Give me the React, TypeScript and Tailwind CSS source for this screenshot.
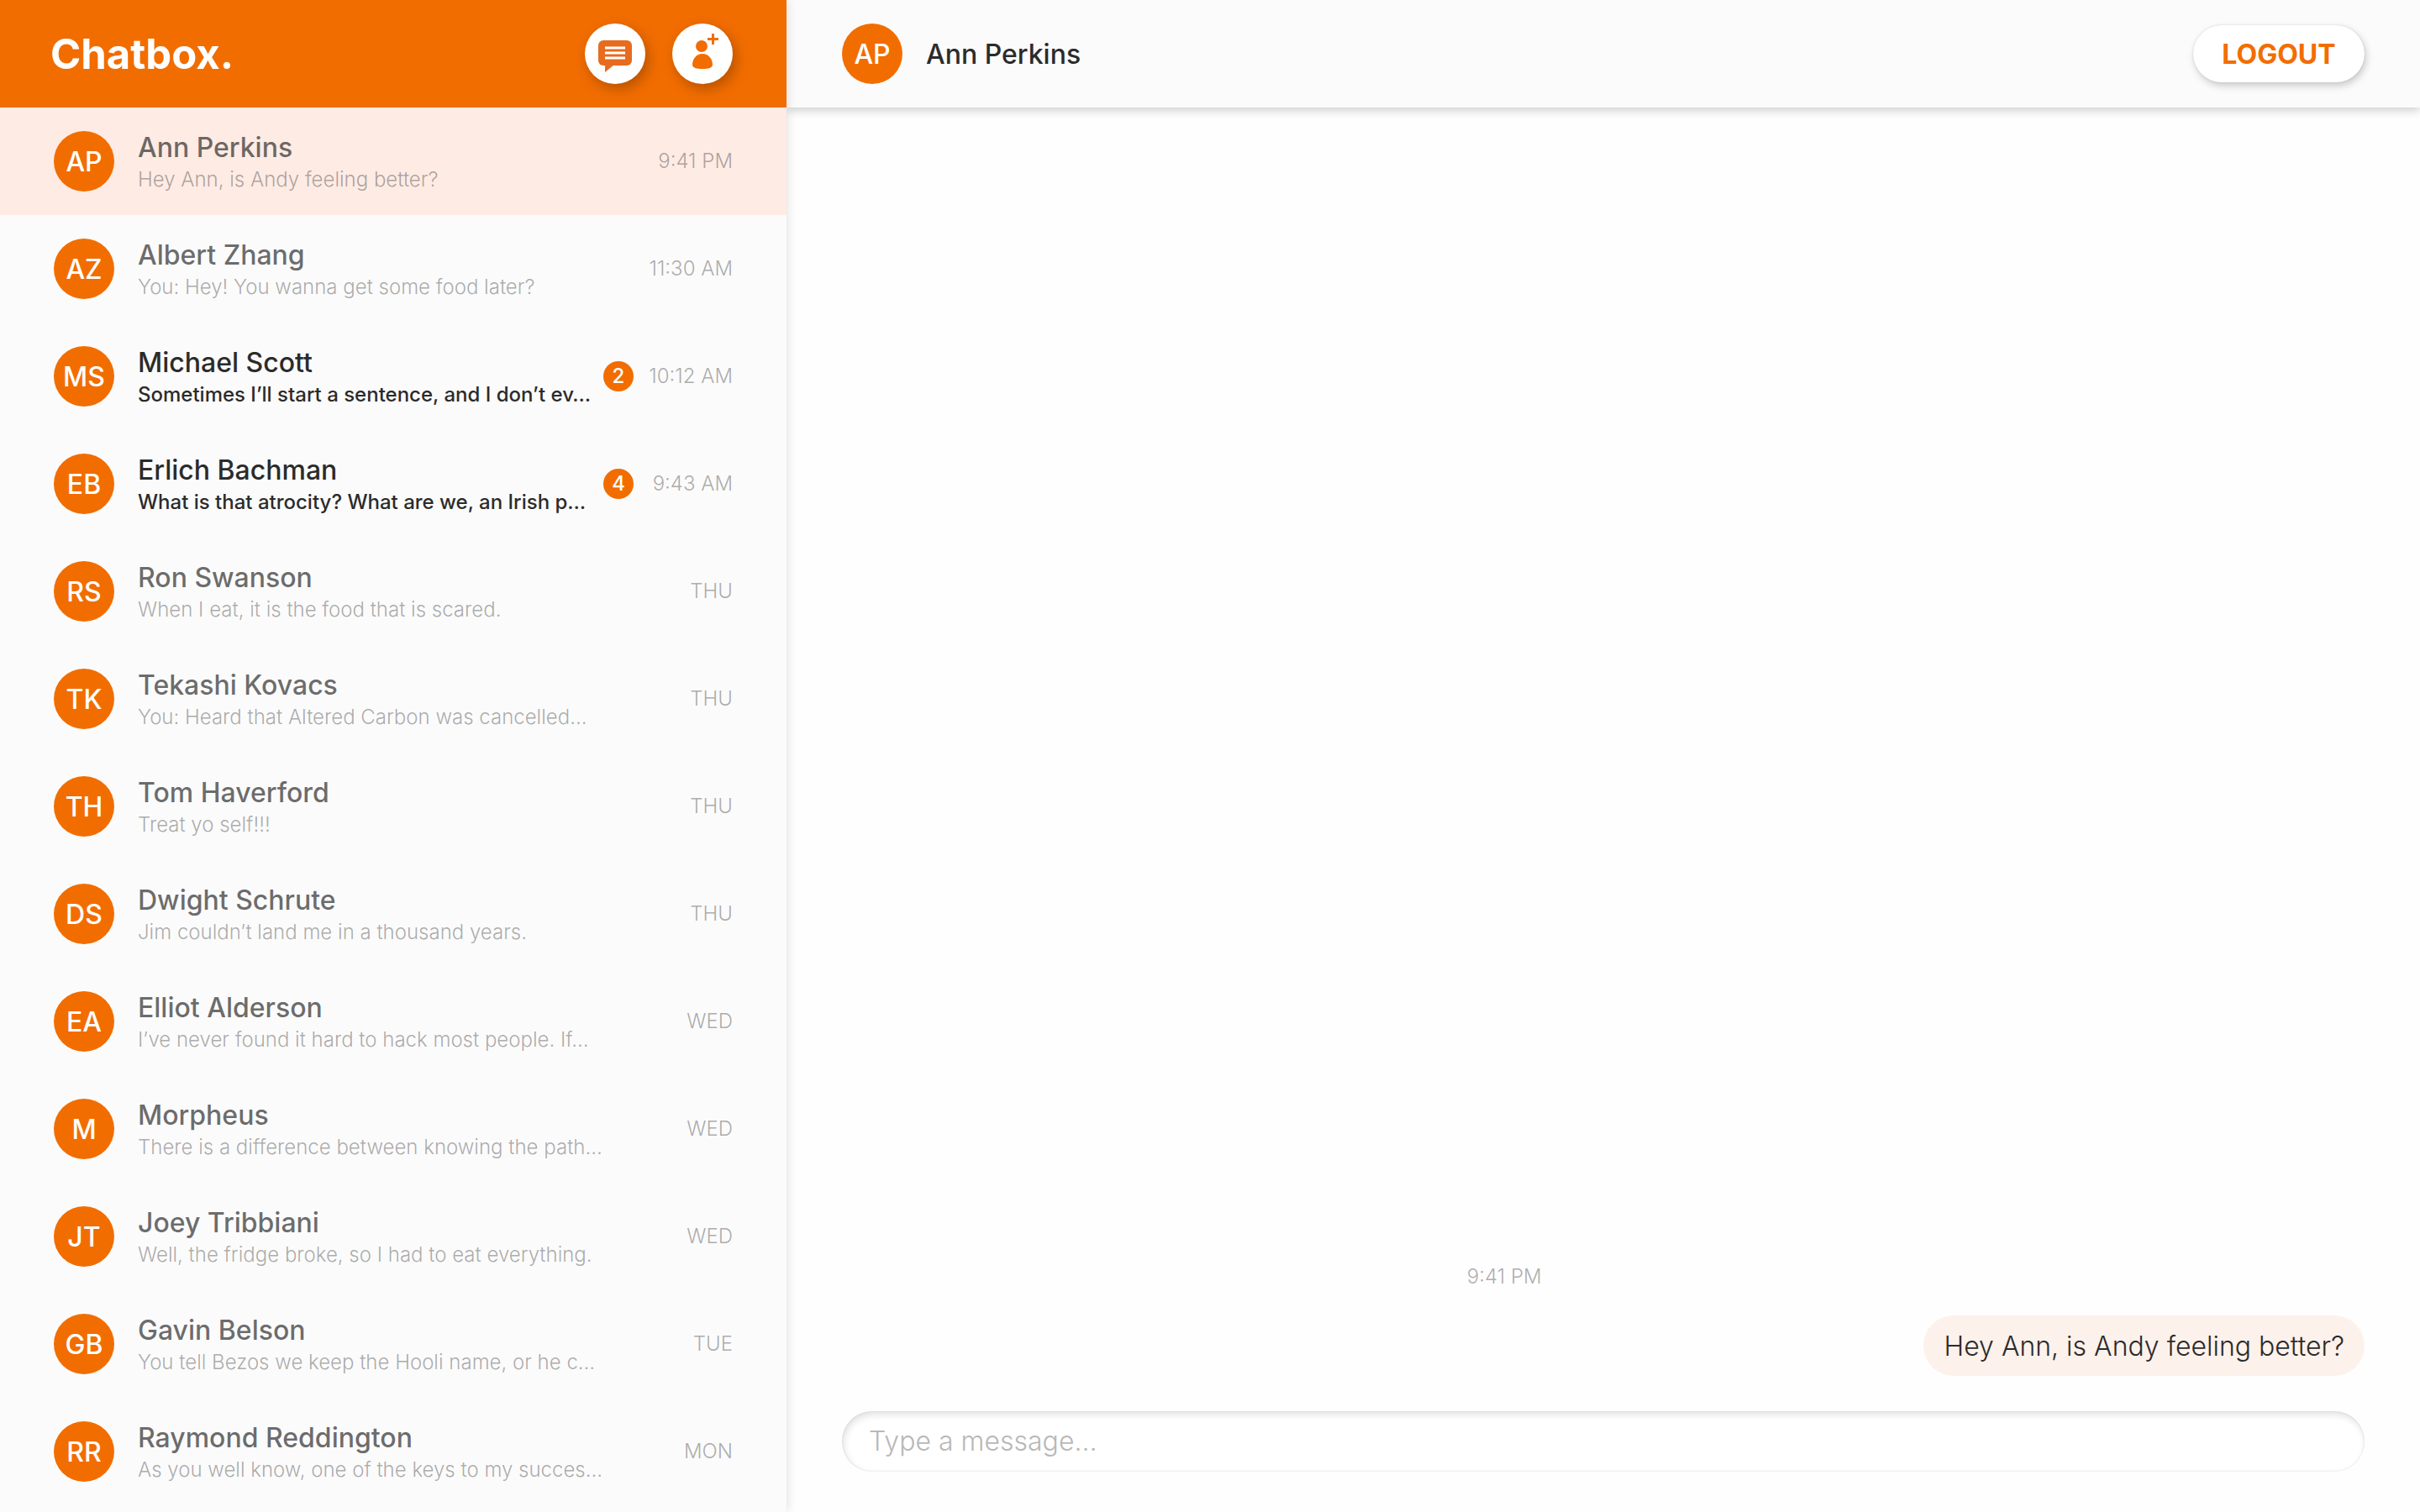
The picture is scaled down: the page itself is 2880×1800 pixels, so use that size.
import type { ReactNode } from "react";

type Chat = {
  initials: string;
  name: string;
  preview: string;
  time: string;
  unread?: number;
  active?: boolean;
};

const chats: Chat[] = [
  { initials: "AP", name: "Ann Perkins", preview: "Hey Ann, is Andy feeling better?", time: "9:41 PM", active: true },
  { initials: "AZ", name: "Albert Zhang", preview: "You: Hey! You wanna get some food later?", time: "11:30 AM" },
  { initials: "MS", name: "Michael Scott", preview: "Sometimes I’ll start a sentence, and I don’t ev…", time: "10:12 AM", unread: 2 },
  { initials: "EB", name: "Erlich Bachman", preview: "What is that atrocity? What are we, an Irish p…", time: "9:43 AM", unread: 4 },
  { initials: "RS", name: "Ron Swanson", preview: "When I eat, it is the food that is scared.", time: "THU" },
  { initials: "TK", name: "Tekashi Kovacs", preview: "You: Heard that Altered Carbon was cancelled…", time: "THU" },
  { initials: "TH", name: "Tom Haverford", preview: "Treat yo self!!!", time: "THU" },
  { initials: "DS", name: "Dwight Schrute", preview: "Jim couldn’t land me in a thousand years.", time: "THU" },
  { initials: "EA", name: "Elliot Alderson", preview: "I’ve never found it hard to hack most people. If…", time: "WED" },
  { initials: "M", name: "Morpheus", preview: "There is a difference between knowing the path…", time: "WED" },
  { initials: "JT", name: "Joey Tribbiani", preview: "Well, the fridge broke, so I had to eat everything.", time: "WED" },
  { initials: "GB", name: "Gavin Belson", preview: "You tell Bezos we keep the Hooli name, or he c…", time: "TUE" },
  { initials: "RR", name: "Raymond Reddington", preview: "As you well know, one of the keys to my succes…", time: "MON" },
];

function Avatar({ initials }: { initials: string }) {
  return (
    <span className="flex size-18 shrink-0 items-center justify-center rounded-full bg-[#f26d00] pt-0.5 text-[32px] leading-10 font-medium text-white">
      {initials}
    </span>
  );
}

function MessageIcon() {
  return (
    <svg viewBox="0 0 72 72" className="size-18" aria-hidden="true">
      <rect x="16" y="20" width="40" height="30" rx="6" fill="#e66c1f" />
      <path d="M24 49v9l11-9z" fill="#e66c1f" />
      <path d="M24 29h24M24 35h24M24 41h24" stroke="#fff" strokeWidth="3" />
    </svg>
  );
}

function AddPersonIcon() {
  return (
    <svg viewBox="0 0 72 72" className="size-18" aria-hidden="true" fill="#f26d00">
      <circle cx="35" cy="27" r="7" />
      <path d="M36 36c7 0 12 6 12 13 0 4-5 5-12 5s-12-1-12-5c0-7 5-13 12-13z" />
      <path d="M47 12h3v5h5v3h-5v5h-3v-5h-5v-3h5z" />
    </svg>
  );
}

function RoundButton({ label, children }: { label: string; children: ReactNode }) {
  return (
    <button
      type="button"
      aria-label={label}
      className="size-18 rounded-full bg-white shadow-[4px_6px_16px_rgba(0,0,0,0.25)]"
    >
      {children}
    </button>
  );
}

function ChatRow({ chat }: { chat: Chat }) {
  const unread = chat.unread !== undefined;
  return (
    <li>
      <button
        type="button"
        className={`flex h-32 w-full items-center pr-16 pl-16 text-left ${chat.active ? "bg-[#feebe4]" : ""}`}
      >
        <Avatar initials={chat.initials} />
        <span className="ml-7 flex min-w-0 flex-1 flex-col pt-1 whitespace-nowrap">
          <span className={`text-[32px] leading-10 font-medium ${unread ? "text-[#2b2b2b]" : "text-[#2b2b2b]/70"}`}>
            {chat.name}
          </span>
          <span
            className={`text-2xl leading-9 ${unread ? "font-medium text-[#2b2b2b]" : "font-light text-[#2b2b2b]/40"}`}
          >
            {chat.preview}
          </span>
        </span>
        {unread && (
          <span className="flex size-9 shrink-0 items-center justify-center rounded-full bg-[#f26d00] text-2xl font-medium text-white">
            {chat.unread}
          </span>
        )}
        <span className="w-[118px] shrink-0 text-right text-2xl font-light whitespace-nowrap text-[#2b2b2b]/40">
          {chat.time}
        </span>
      </button>
    </li>
  );
}

export default function App() {
  return (
    <div className="flex min-h-screen bg-[#fefefe] font-[Inter,sans-serif] text-[#2b2b2b]">
      <aside className="z-20 flex w-[32.5%] shrink-0 flex-col bg-[#fbfbfb] shadow-[0_0_12px_rgba(0,0,0,0.14)]">
        <header className="flex h-32 items-center justify-between bg-[#f26d00] pr-16 pl-15">
          <h1 className="pt-0.5 text-[49px] leading-15 font-bold text-white">Chatbox.</h1>
          <div className="flex gap-8">
            <RoundButton label="New message">
              <MessageIcon />
            </RoundButton>
            <RoundButton label="Add contact">
              <AddPersonIcon />
            </RoundButton>
          </div>
        </header>
        <ul>
          {chats.map((chat) => (
            <ChatRow key={chat.name} chat={chat} />
          ))}
        </ul>
      </aside>

      <main className="flex min-w-0 flex-1 flex-col">
        <header className="z-10 flex h-32 items-center bg-[#fbfbfb] px-[66px] shadow-[0_4px_10px_rgba(0,0,0,0.18)]">
          <Avatar initials="AP" />
          <h2 className="ml-7 pt-0.5 text-[32px] leading-10 font-medium">Ann Perkins</h2>
          <button
            type="button"
            className="ml-auto h-17 min-w-51 rounded-full bg-white px-8 pt-0.5 text-[32px] leading-10 font-bold text-[#f26d00] shadow-[2px_4px_10px_rgba(0,0,0,0.2),0_0_2px_rgba(0,0,0,0.15)]"
          >
            LOGOUT
          </button>
        </header>

        <section aria-label="Conversation" className="flex flex-1 flex-col justify-end px-[66px] pb-12">
          <div className="flex flex-col">
            <time className="mb-7 pr-[13%] text-center text-2xl leading-9 font-light text-[#2b2b2b]/40">9:41 PM</time>
            <p className="flex h-18 items-center self-end rounded-full bg-[#fdf1eb] px-6 pt-0.5 text-[32px] leading-10 font-light">
              Hey Ann, is Andy feeling better?
            </p>
          </div>
          <input
            type="text"
            aria-label="Message"
            placeholder="Type a message…"
            className="mt-[42px] h-18 w-full rounded-full bg-white px-8 pb-0.5 text-[32px] font-light shadow-[inset_2px_4px_8px_rgba(0,0,0,0.12),inset_0_0_2px_rgba(0,0,0,0.15)] outline-none placeholder:text-[#b8b8b8]"
          />
        </section>
      </main>
    </div>
  );
}
